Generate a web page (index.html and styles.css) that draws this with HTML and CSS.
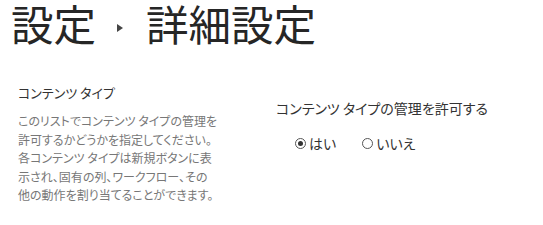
FILE: index.html
```html
<!DOCTYPE html>
<html lang="ja">
  <head>
    <meta charset="UTF-8" />
    <title>詳細設定</title>
    <link rel="stylesheet" href="styles.css">
  </head>
  <body>
    <h1 class="crumb">
      <span>設定</span>
      <span class="sep"></span>
      <span>詳細設定</span>
    </h1>

    <div class="section">
      <div class="about">
        <h2>コンテンツ タイプ</h2>
        <p>このリストでコンテンツ タイプの管理を<br>許可するかどうかを指定してください。<br>各コンテンツ タイプは新規ボタンに表<br>示され、固有の列、ワークフロー、その<br>他の動作を割り当てることができます。</p>
      </div>
      <div class="field">
        <div class="label">コンテンツ タイプの管理を許可する</div>
        <div class="choices">
          <label><input type="radio" name="ct" checked />はい</label>
          <label><input type="radio" name="ct" />いいえ</label>
        </div>
      </div>
    </div>
  </body>
</html>
```

FILE: styles.css
```css
html {
  font-family: "Noto Sans CJK JP", "Noto Sans", sans-serif;
  font-feature-settings: "palt";
  background: #ffffff;
}

body {
  margin: 0;
}

/* breadcrumb title */
.crumb {
  display: flex;
  align-items: center;
  gap: 21px;
  margin: 0;
  padding: 0 0 0 11px;
  font-size: 42.5px;
  font-weight: 400;
  line-height: 46px;
  color: #262626;
  font-feature-settings: normal;
}
.crumb .sep {
  width: 0;
  height: 0;
  border-top: 4px solid transparent;
  border-bottom: 4px solid transparent;
  border-left: 6px solid #444444;
  margin: 10px 2px 0 0;
}

/* section */
.section {
  display: grid;
  grid-template-columns: 258px auto;
  padding: 38px 0 0 18px;
}
.about h2 {
  margin: 0;
  font-size: 13px;
  font-weight: 400;
  line-height: 18px;
  color: #333333;
}
.about p {
  margin: 10px 0 0;
  font-size: 12px;
  line-height: 18.5px;
  color: #777777;
  white-space: nowrap;
}

.field {
  padding-top: 15px;
}
.field .label {
  font-size: 14px;
  line-height: 18px;
  color: #333333;
}
.choices {
  display: flex;
  gap: 26px;
  padding: 17px 0 0 19px;
}
.choices label {
  display: flex;
  align-items: center;
  gap: 3px;
  font-size: 14px;
  line-height: 18px;
  color: #333333;
}
.choices input {
  appearance: none;
  margin: 0;
  width: 11px;
  height: 11px;
  border: 1px solid #555555;
  border-radius: 50%;
  box-sizing: border-box;
  position: relative;
}
.choices input:checked::after {
  content: "";
  position: absolute;
  inset: 2px;
  border-radius: 50%;
  background: #333333;
}
```
